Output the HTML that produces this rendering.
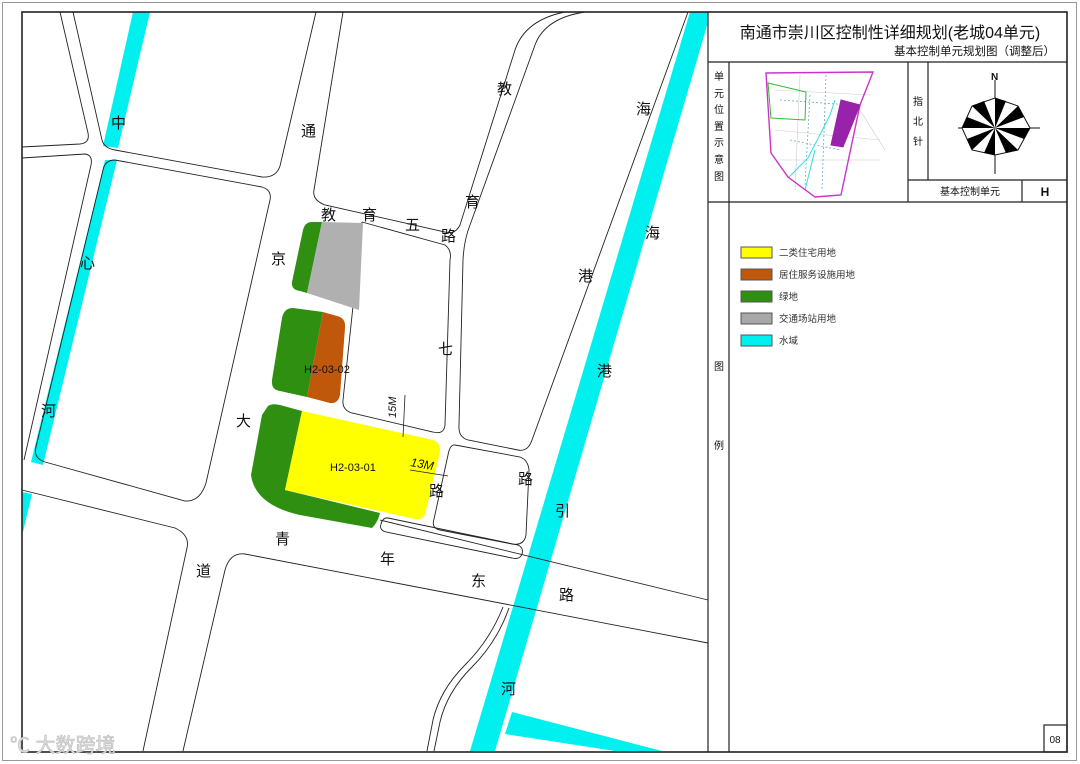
<!DOCTYPE html>
<html><head><meta charset="utf-8"><style>
html,body{margin:0;padding:0;background:#fff;}
svg{display:block;}
text{font-family:"Liberation Sans","Noto Sans CJK SC",sans-serif;}
</style></head><body>
<svg width="1080" height="764" viewBox="0 0 1080 764" xmlns="http://www.w3.org/2000/svg">
<rect x="0" y="0" width="1080" height="764" fill="#fff"/>
<rect x="2.5" y="2.5" width="1074" height="758" fill="none" stroke="#999" stroke-width="1"/>
<g fill="#00f0f0">
<polygon points="133,12 150,12 118,148 103,146"/>
<polygon points="105,160 117,160 43,465 31,462"/>
<polygon points="22,492 32,494 23,532 22,532"/>
<polygon points="690,12 711,12 495,751 470,751"/>
<polygon points="512,712 662,751 615,751 505,734"/>
</g>
<g fill="none" stroke="#222" stroke-width="0.9">
<path d="M60,12 L88,133 Q90,143 80,144 L22,147"/>
<path d="M73,12 L102,140 Q104,148 115,150 L262,177 Q276,178 280,166 L316,12"/>
<path d="M22,158 L85,154 Q93,155 91,165 L24,460"/>
<path d="M115,160 L262,187 Q272,190 270,200 L206,483 Q200,502 185,501 L45,462 Q33,458 36,447 L103,170 Q105,160 115,160"/>
<path d="M22,490 L175,528 Q190,535 187,548 L143,751"/>
<path d="M183,751 L225,570 Q230,552 245,554 L708,643"/>
<path d="M380,520 L708,600"/>
<path d="M343,12 L314,190 Q312,200 325,205 L445,232 Q455,235 460,225 L515,50 Q525,20 565,12"/>
<path d="M585,12 Q545,18 535,45 L470,225 Q464,240 463,260 L459,425 Q458,437 468,440 L518,450 Q528,452 532,440 L688,12"/>
<path d="M362,222 L445,245 Q452,250 450,260 L445,425 Q444,435 433,432 L352,413 Q342,410 343,400 L362,222"/>
<path d="M455,445 L520,457 Q528,460 529,470 L526,535 Q524,546 512,544 L440,530 Q431,528 434,519 L448,455 Q450,444 455,445"/>
<path d="M388,518 L518,545 Q524,548 522,554 Q520,560 512,558 L386,532 Q379,530 381,524 Q383,517 388,518"/>
<path d="M503,607 Q490,640 465,665 Q440,690 433,720 L427,751"/>
<path d="M509,608 Q497,642 472,667 Q447,692 440,722 L434,751"/>
</g>
<path d="M322,222 L312,222 Q305,222 303,230 L292,282 Q291,290 300,291 L307,293 Z" fill="#2e8f10"/>
<path d="M322,222 L363,223 L359,310 L307,293 Z" fill="#b0b0b0"/>
<path d="M323,312 L293,308 Q284,308 282,318 L272,380 Q271,390 280,391 L307,397 Z" fill="#2e8f10"/>
<path d="M323,312 L337,316 Q346,318 345,328 L340,395 Q338,404 330,403 L307,397 Z" fill="#c0580c"/>
<path d="M268,406 Q272,403 280,405 L302,411 L285,490 L380,513 Q378,522 372,528 L300,515 Q255,505 251,475 L262,415 Z" fill="#2e8f10"/>
<path d="M302,411 L433,440 Q441,443 440,452 L425,515 Q422,520 415,519 L285,490 Z" fill="#ffff00"/>
<g fill="#111" font-size="11">
<text x="304" y="373">H2-03-02</text>
<text x="330" y="471">H2-03-01</text>
<text x="0" y="0" transform="translate(396,418) rotate(-90)" font-style="italic">15M</text>
<text x="0" y="0" transform="translate(410,466) rotate(10)" font-style="italic" font-size="12">13M</text>
</g>
<g stroke="#222" stroke-width="0.8" fill="none"><line x1="405" y1="395" x2="403" y2="437"/><line x1="410" y1="470" x2="448" y2="476"/></g>
<g fill="#111" font-size="15">
<text x="111" y="128">中</text><text x="80" y="268">心</text><text x="41" y="416">河</text>
<text x="301" y="136">通</text><text x="271" y="264">京</text><text x="236" y="426">大</text><text x="196" y="576">道</text>
<text x="275" y="544">青</text><text x="380" y="564">年</text><text x="471" y="586">东</text><text x="559" y="600">路</text>
<text x="497" y="94">教</text><text x="465" y="207">育</text><text x="438" y="354">七</text><text x="429" y="496">路</text><text x="518" y="484">路</text>
<text x="636" y="114">海</text><text x="645" y="238">海</text><text x="578" y="281">港</text><text x="597" y="376">港</text><text x="555" y="516">引</text><text x="501" y="694">河</text>
<text x="321" y="220">教</text><text x="362" y="220">育</text><text x="405" y="230">五</text><text x="441" y="241">路</text>
</g>
<rect x="708" y="12" width="359" height="740" fill="#fff" stroke="none"/>
<rect x="22" y="12" width="1045" height="740" fill="none" stroke="#222" stroke-width="1.6"/>
<g stroke="#222" stroke-width="1.2" fill="none">
<line x1="708" y1="12" x2="708" y2="752"/>
<line x1="708" y1="62" x2="1067" y2="62"/>
<line x1="729" y1="62" x2="729" y2="752"/>
<line x1="908" y1="62" x2="908" y2="202"/>
<line x1="928" y1="62" x2="928" y2="180"/>
<line x1="908" y1="180" x2="1067" y2="180"/>
<line x1="708" y1="202" x2="1067" y2="202"/>
<line x1="1022" y1="180" x2="1022" y2="202"/>
<rect x="1044" y="725" width="23" height="27"/>
</g>
<text x="890" y="38" font-size="16" text-anchor="middle" fill="#111">南通市崇川区控制性详细规划(老城04单元)</text>
<text x="1055" y="55" font-size="11.5" text-anchor="end" fill="#111">基本控制单元规划图（调整后）</text>
<g font-size="10" fill="#111" text-anchor="middle">
<text x="719" y="80">单</text><text x="719" y="97">元</text><text x="719" y="113">位</text><text x="719" y="130">置</text><text x="719" y="146">示</text><text x="719" y="163">意</text><text x="719" y="180">图</text>
<text x="918" y="105">指</text><text x="918" y="125">北</text><text x="918" y="145">针</text>
<text x="970" y="195">基本控制单元</text>
<text x="1045" y="196" font-size="12" font-weight="bold">H</text>
<text x="719" y="370">图</text><text x="719" y="449">例</text>
<text x="1055" y="743">08</text>
</g>
<g fill="none" stroke-width="1">
<g stroke="#ccc" stroke-width="0.6">
<line x1="775" y1="90" x2="870" y2="95"/><line x1="775" y1="130" x2="880" y2="140"/><line x1="780" y1="160" x2="880" y2="160"/><line x1="800" y1="75" x2="795" y2="190"/><line x1="860" y1="110" x2="885" y2="150"/>
</g>
<g stroke="#66aacc" stroke-width="0.8" stroke-dasharray="2,2">
<line x1="780" y1="100" x2="850" y2="105"/><line x1="790" y1="140" x2="840" y2="150"/><line x1="826" y1="75" x2="822" y2="190"/><line x1="810" y1="95" x2="805" y2="185"/>
</g>
<path d="M788,178 L808,158 L830,115 L835,100 M805,190 L815,150" stroke="#33dddd"/>
<polygon points="768,83 806,92 805,120 771,118" stroke="#33bb33"/>
<polygon points="766,73 873,72 860,105 841,195 815,197 788,177 771,153" stroke="#cc33cc" stroke-width="1.4"/>
<polygon points="841,100 860,105 843,147 831,145" fill="#9922aa" stroke="#9922aa"/>
</g>
<g>
<line x1="958" y1="128" x2="1040" y2="128" stroke="#111"/>
<line x1="995" y1="80" x2="995" y2="174" stroke="#111"/>
<polygon points="995,98 1018,106 1030,128 1018,150 995,155 972,150 962,128 972,106" fill="#fff" stroke="#111"/>
<g fill="#000">
<polygon points="995,128 995,98 1006,101"/><polygon points="995,128 1018,106 1024,117"/><polygon points="995,128 1030,128 1024,139"/><polygon points="995,128 1018,150 1006,153"/>
<polygon points="995,128 995,155 984,153"/><polygon points="995,128 972,150 967,139"/><polygon points="995,128 962,128 967,117"/><polygon points="995,128 972,106 984,101"/>
</g>
<text x="991" y="80" font-size="10" font-weight="bold" fill="#111">N</text>
</g>
<g stroke="#555" stroke-width="1">
<rect x="741" y="247" width="31" height="11" fill="#ffff00"/>
<rect x="741" y="269" width="31" height="11" fill="#c0580c"/>
<rect x="741" y="291" width="31" height="11" fill="#2e8f10"/>
<rect x="741" y="313" width="31" height="11" fill="#a8a8a8"/>
<rect x="741" y="335" width="31" height="11" fill="#00f0f0"/>
</g>
<g font-size="9.5" fill="#333" font-family="'Liberation Serif','Noto Serif CJK SC',serif">
<text x="779" y="256">二类住宅用地</text>
<text x="779" y="278">居住服务设施用地</text>
<text x="779" y="300">绿地</text>
<text x="779" y="322">交通场站用地</text>
<text x="779" y="344">水域</text>
</g>
<text x="10" y="752" font-size="20" fill="#ddd" stroke="#bbb" stroke-width="0.6">℃ 大数跨境</text>
</svg>
</body></html>
